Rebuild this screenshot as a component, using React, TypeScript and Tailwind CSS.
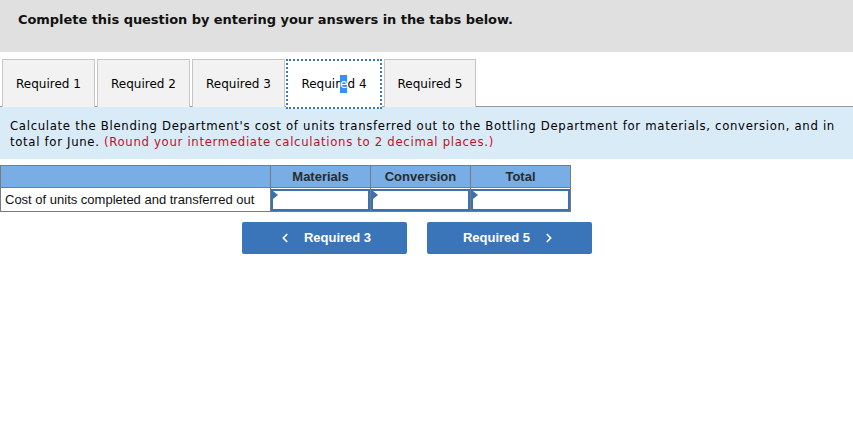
import { ChevronLeft, ChevronRight } from "lucide-react";

const tabs = ["Required 1", "Required 2", "Required 3", "Required 4", "Required 5"];
const active = 3;

function InputCell() {
  return (
    <td className="border border-[#7b7b7b] p-0 h-[24px]">
      <div className="relative h-[22px] border-2 border-[#3a72b0] bg-white">
        <span className="absolute left-0 top-0 h-0 w-0 border-t-[4px] border-b-[4px] border-l-[5px] border-t-transparent border-b-transparent border-l-[#3a72b0]" />
      </div>
    </td>
  );
}

export default function App() {
  return (
    <div className="w-[853px] h-[430px] bg-white font-['DejaVu_Sans',sans-serif] text-black">
      <div className="h-[52px] bg-[#e0e0e0] pl-[18px] pt-[12px]">
        <p className="text-[13px] font-bold leading-[16px] tracking-[-0.05px] text-[#111]">
          Complete this question by entering your answers in the tabs below.
        </p>
      </div>

      <div className="mt-[7px] flex pl-[2px] gap-[2px] border-b border-[#999] h-[48px]">
        {tabs.map((t, i) =>
          i === active ? (
            <div
              key={t}
              className="relative z-10 -mb-[2px] -ml-[1px] flex h-[50px] w-[96px] items-center justify-center border-2 border-dotted border-[#3d79b9] bg-white text-[12px]"
            >
              Requir<span className="bg-[#3390ff] text-white">e</span>d 4
            </div>
          ) : (
            <div
              key={t}
              className={`flex h-[48px] ${i === 4 ? "w-[92px]" : "w-[93px]"} items-center justify-center border border-b-0 border-[#c6c6c6] bg-[#f2f2f2] text-[12px]`}
            >
              {t}
            </div>
          )
        )}
      </div>

      <div className="bg-[#daebf8] px-[10px] pt-[11px] pb-[9px] font-['DejaVu_Sans_Condensed','DejaVu_Sans',sans-serif] text-[13px] leading-[16px] tracking-[0.68px]">
        Calculate the Blending Department's cost of units transferred out to the Bottling Department for materials, conversion, and in
        <br />
        total for June. <span className="text-[#c0102a]">(Round your intermediate calculations to 2 decimal places.)</span>
      </div>

      <table className="mt-[6px] border-collapse font-['Liberation_Sans',sans-serif] text-[13px]">
        <thead>
          <tr className="bg-[#78ade5] h-[22px]">
            <th className="w-[270px] border border-[#7b7b7b]" />
            <th className="w-[100px] border border-[#7b7b7b] font-bold text-[#2b2b2b]">Materials</th>
            <th className="w-[100px] border border-[#7b7b7b] font-bold text-[#2b2b2b]">Conversion</th>
            <th className="w-[100px] border border-[#7b7b7b] font-bold text-[#2b2b2b]">Total</th>
          </tr>
        </thead>
        <tbody>
          <tr>
            <td className="border border-[#7b7b7b] px-[4px] text-left text-[#111]">Cost of units completed and transferred out</td>
            <InputCell />
            <InputCell />
            <InputCell />
          </tr>
        </tbody>
      </table>

      <div className="mt-[10px] flex gap-[20px] pl-[242px] font-['Liberation_Sans',sans-serif]">
        <button className="flex h-[32px] w-[165px] items-center justify-center gap-[12px] rounded-[2px] bg-[#3a75ba] text-[13px] font-bold text-white">
          <ChevronLeft className="h-[14px] w-[14px]" strokeWidth={3} />
          Required 3
        </button>
        <button className="flex h-[32px] w-[165px] items-center justify-center gap-[12px] rounded-[2px] bg-[#3a75ba] text-[13px] font-bold text-white">
          Required 5
          <ChevronRight className="h-[14px] w-[14px]" strokeWidth={3} />
        </button>
      </div>
    </div>
  );
}
